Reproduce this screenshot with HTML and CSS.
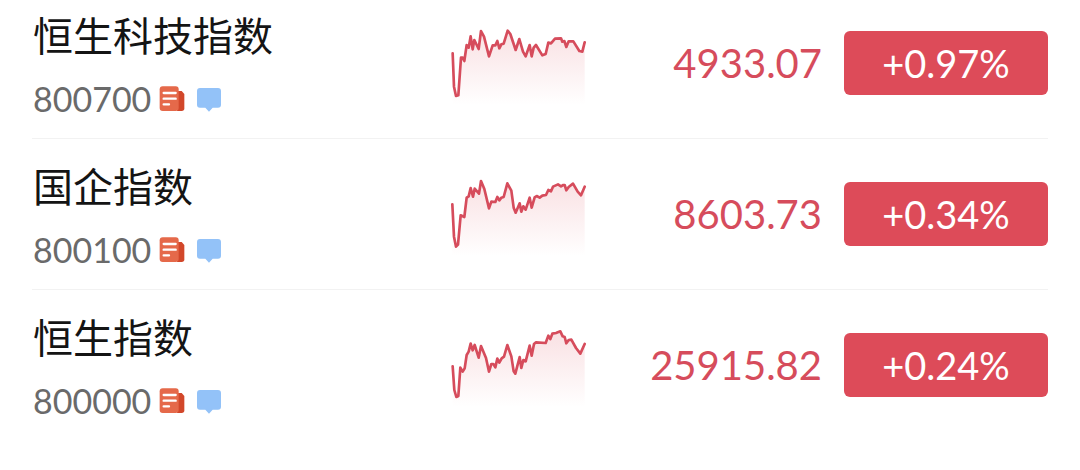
FILE: index.html
```html
<!DOCTYPE html>
<html lang="zh-CN">
<head>
<meta charset="utf-8">
<meta name="viewport" content="width=device-width, initial-scale=1">
<title>恒生指数行情</title>
<link rel="stylesheet" href="styles.css">
</head>
<body>
<svg class="defs" aria-hidden="true">
  <defs>
    <linearGradient id="fade" x1="0" y1="0" x2="0" y2="1">
      <stop offset="0" stop-color="#dd4b59" stop-opacity="0.17"/>
      <stop offset="1" stop-color="#dd4b59" stop-opacity="0"/>
    </linearGradient>
    <symbol id="news" viewBox="0 0 78 78">
      <path d="M54 15h14l8 9v43q0 8-8 8H54z" fill="#d2472a"/>
      <rect x="2" y="1" width="57" height="74" rx="9" fill="#e5694a"/>
      <path d="M14 21h36M14 38h36M14 55h16" stroke="#fff" stroke-width="7" stroke-linecap="round"/>
    </symbol>
    <symbol id="chat" viewBox="0 0 78 78">
      <path d="M12 6h54q9 0 9 9v41q0 9-9 9H50L39 77 28 65H12q-9 0-9-9V15q0-9 9-9z" fill="#93c2f8"/>
    </symbol>
  </defs>
</svg>
<main>
  <ul class="quotes">
    <li class="quote">
      <div class="stock">
        <h2 class="name">恒生科技指数</h2>
        <div class="meta"><span class="code">800700</span>
          <span class="icons"><svg class="icon"><use href="#news"/></svg><svg class="icon"><use href="#chat"/></svg></span></div>
      </div>
      <svg class="chart" viewBox="30 18 408 252" aria-hidden="true">
        <path class="area" d="M38 115L42 215 48 243 55 241 63 128 68 128 73 138 80 90 86 98 92 64 98 103 103 75 116 102 123 48 132 65 147 124 158 91 166 91 172 78 178 100 184 88 191 86 203 47 211 57 227 105 238 72 249 110 257 124 269 90 275 124 281 98 288 90 307 121 317 117 325 83 333 85 345 71 363 70 367 80 373 78 379 96 386 79 400 79 418 108 427 110 434 82V270H38z"/>
        <path class="line" d="M38 115L42 215 48 243 55 241 63 128 68 128 73 138 80 90 86 98 92 64 98 103 103 75 116 102 123 48 132 65 147 124 158 91 166 91 172 78 178 100 184 88 191 86 203 47 211 57 227 105 238 72 249 110 257 124 269 90 275 124 281 98 288 90 307 121 317 117 325 83 333 85 345 71 363 70 367 80 373 78 379 96 386 79 400 79 418 108 427 110 434 82"/>
      </svg>
      <span class="price">4933.07</span>
      <span class="change">+0.97%</span>
    </li>
    <li class="quote">
      <div class="stock">
        <h2 class="name">国企指数</h2>
        <div class="meta"><span class="code">800100</span>
          <span class="icons"><svg class="icon"><use href="#news"/></svg><svg class="icon"><use href="#chat"/></svg></span></div>
      </div>
      <svg class="chart" viewBox="30 21 408 252" aria-hidden="true">
        <path class="area" d="M37 118L42 215 48 245 54 239 62 151 73 156 80 98 86 94 92 69 99 95 104 71 117 86 123 48 133 72 147 130 154 110 166 111 172 96 178 106 184 98 191 96 202 55 214 77 221 128 227 143 239 115 244 140 250 124 257 134 269 98 275 128 284 97 290 93 299 98 307 92 318 90 325 75 333 79 339 65 354 58 363 64 370 60 374 60 379 76 386 66 399 56 413 80 423 91 434 65V273H37z"/>
        <path class="line" d="M37 118L42 215 48 245 54 239 62 151 73 156 80 98 86 94 92 69 99 95 104 71 117 86 123 48 133 72 147 130 154 110 166 111 172 96 178 106 184 98 191 96 202 55 214 77 221 128 227 143 239 115 244 140 250 124 257 134 269 98 275 128 284 97 290 93 299 98 307 92 318 90 325 75 333 79 339 65 354 58 363 64 370 60 374 60 379 76 386 66 399 56 413 80 423 91 434 65"/>
      </svg>
      <span class="price">8603.73</span>
      <span class="change">+0.34%</span>
    </li>
    <li class="quote">
      <div class="stock">
        <h2 class="name">恒生指数</h2>
        <div class="meta"><span class="code">800000</span>
          <span class="icons"><svg class="icon"><use href="#news"/></svg><svg class="icon"><use href="#chat"/></svg></span></div>
      </div>
      <svg class="chart" viewBox="30 24 408 252" aria-hidden="true">
        <path class="area" d="M38 154L43 225 49 246 55 243 61 158 68 170 74 160 80 120 86 110 92 86 98 106 104 90 116 128 123 93 138 129 147 170 154 147 160 147 166 157 172 131 178 143 185 130 192 125 202 90 214 124 221 169 226 176 239 126 244 159 250 135 257 139 269 92 275 122 282 87 288 82 317 84 325 62 331 72 337 56 348 54 361 49 368 64 374 66 379 85 386 75 394 74 408 99 421 116 434 87V276H38z"/>
        <path class="line" d="M38 154L43 225 49 246 55 243 61 158 68 170 74 160 80 120 86 110 92 86 98 106 104 90 116 128 123 93 138 129 147 170 154 147 160 147 166 157 172 131 178 143 185 130 192 125 202 90 214 124 221 169 226 176 239 126 244 159 250 135 257 139 269 92 275 122 282 87 288 82 317 84 325 62 331 72 337 56 348 54 361 49 368 64 374 66 379 85 386 75 394 74 408 99 421 116 434 87"/>
      </svg>
      <span class="price">25915.82</span>
      <span class="change">+0.24%</span>
    </li>
  </ul>
</main>
</body>
</html>
```

FILE: styles.css
```css
* {
  box-sizing: border-box;
}

body {
  margin: 0;
  background: #fff;
  font-family: Lato, "Noto Sans CJK SC", sans-serif;
}

.defs {
  display: block;
  width: 0;
  height: 0;
}

.quotes {
  margin: 0;
  padding: 0 32px;
  list-style: none;
}

.quote {
  display: grid;
  grid-template-columns: minmax(0, 21fr) 136px minmax(0, 13fr) 204px;
  align-items: center;
  padding: 20px 0;
  border-bottom: 1px solid #f2f2f2;
}

.quote:first-child {
  padding-top: 8px;
}

.quote:last-child {
  border-bottom: 0;
}

.stock {
  display: flex;
  flex-direction: column;
  gap: 16px;
  padding-left: 1px;
}

.name {
  margin: 0;
  color: #141414;
  font-size: 40px;
  font-weight: 400;
  line-height: 56px;
  white-space: nowrap;
}

.meta {
  display: flex;
  align-items: center;
  gap: 8px;
}

.code {
  color: #6a6a6a;
  font-size: 34px;
  line-height: 38px;
}

.icons {
  display: flex;
  gap: 11px;
}

.icon {
  width: 26px;
  height: 26px;
}

.chart {
  display: block;
  width: 136px;
  height: 84px;
}

.area {
  fill: url(#fade);
}

.line {
  fill: none;
  stroke: #d64c5c;
  stroke-width: 8;
  stroke-linecap: round;
  stroke-linejoin: round;
}

.price {
  padding-right: 22px;
  color: #d64c5c;
  font-size: 40px;
  line-height: 64px;
  text-align: right;
}

.change {
  border-radius: 6px;
  background: #dd4b59;
  color: #fff;
  font-size: 38px;
  line-height: 64px;
  text-align: center;
}
```
